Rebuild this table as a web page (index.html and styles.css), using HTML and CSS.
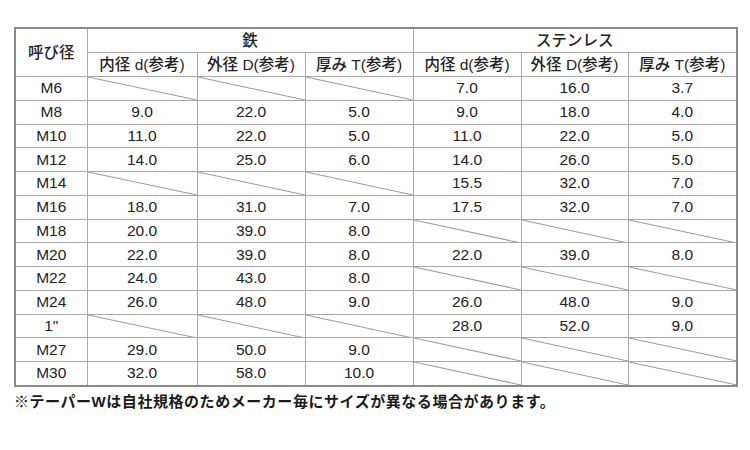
FILE: index.html
```html
<!DOCTYPE html>
<html lang="ja">
<head>
<meta charset="utf-8">
<link rel="stylesheet" href="styles.css">
</head>
<body>
<div class="page">
<table class="spec">
  <colgroup>
    <col class="c-size"><col class="c-a"><col class="c-b"><col class="c-c"><col class="c-d"><col class="c-e"><col class="c-f">
  </colgroup>
  <thead>
    <tr><th rowspan="2" class="h">呼び径</th><th colspan="3" class="h">鉄</th><th colspan="3" class="h">ステンレス</th></tr>
    <tr><th class="h">内径 d(参考)</th><th class="h">外径 D(参考)</th><th class="h">厚み T(参考)</th><th class="h">内径 d(参考)</th><th class="h">外径 D(参考)</th><th class="h">厚み T(参考)</th></tr>
  </thead>
  <tbody>
    <tr><td>M6</td><td class="x"></td><td class="x"></td><td class="x"></td><td>7.0</td><td>16.0</td><td>3.7</td></tr>
    <tr><td>M8</td><td>9.0</td><td>22.0</td><td>5.0</td><td>9.0</td><td>18.0</td><td>4.0</td></tr>
    <tr><td>M10</td><td>11.0</td><td>22.0</td><td>5.0</td><td>11.0</td><td>22.0</td><td>5.0</td></tr>
    <tr><td>M12</td><td>14.0</td><td>25.0</td><td>6.0</td><td>14.0</td><td>26.0</td><td>5.0</td></tr>
    <tr><td>M14</td><td class="x"></td><td class="x"></td><td class="x"></td><td>15.5</td><td>32.0</td><td>7.0</td></tr>
    <tr><td>M16</td><td>18.0</td><td>31.0</td><td>7.0</td><td>17.5</td><td>32.0</td><td>7.0</td></tr>
    <tr><td>M18</td><td>20.0</td><td>39.0</td><td>8.0</td><td class="x"></td><td class="x"></td><td class="x"></td></tr>
    <tr><td>M20</td><td>22.0</td><td>39.0</td><td>8.0</td><td>22.0</td><td>39.0</td><td>8.0</td></tr>
    <tr><td>M22</td><td>24.0</td><td>43.0</td><td>8.0</td><td class="x"></td><td class="x"></td><td class="x"></td></tr>
    <tr><td>M24</td><td>26.0</td><td>48.0</td><td>9.0</td><td>26.0</td><td>48.0</td><td>9.0</td></tr>
    <tr><td>1"</td><td class="x"></td><td class="x"></td><td class="x"></td><td>28.0</td><td>52.0</td><td>9.0</td></tr>
    <tr><td>M27</td><td>29.0</td><td>50.0</td><td>9.0</td><td class="x"></td><td class="x"></td><td class="x"></td></tr>
    <tr><td>M30</td><td>32.0</td><td>58.0</td><td>10.0</td><td class="x"></td><td class="x"></td><td class="x"></td></tr>
  </tbody>
</table>
<p class="note">※テーパーWは自社規格のためメーカー毎にサイズが異なる場合があります。</p>
</div>
</body>
</html>
```

FILE: styles.css
```css
html, body {
  margin: 0;
  padding: 0;
  background: #ffffff;
}
.page {
  padding: 27px 0 0 14px;
  font-family: "Liberation Sans", "Noto Sans CJK JP", sans-serif;
  color: #222222;
}
.spec {
  border-collapse: collapse;
  table-layout: fixed;
  width: 722px;
  border: 2px solid #8a8a8a;
}
.c-size { width: 72px; }
.c-a { width: 110px; }
.c-b { width: 108px; }
.c-c { width: 108px; }
.c-d { width: 108px; }
.c-e { width: 107px; }
.c-f { width: 109px; }
.spec th, .spec td {
  border: 1px solid #a8a8a8;
  padding: 0;
  height: 22.75px;
  text-align: center;
  vertical-align: middle;
  font-size: 15.5px;
  line-height: 18px;
  white-space: nowrap;
}
.spec th.h {
  font-weight: 500;
  font-size: 15.5px;
  height: 23px;
}
.spec td.x {
  background-image: url("data:image/svg+xml,%3Csvg xmlns='http://www.w3.org/2000/svg' width='100' height='100' viewBox='0 0 100 100' preserveAspectRatio='none'%3E%3Cline x1='0' y1='0' x2='100' y2='100' stroke='%239a9a9a' stroke-width='1' vector-effect='non-scaling-stroke'/%3E%3C/svg%3E");
  background-size: 100% 100%;
  background-repeat: no-repeat;
}
.note {
  margin: 5px 0 0 0;
  font-size: 15px;
  font-weight: 700;
  line-height: 20px;
  letter-spacing: 0.55px;
  color: #1a1a1a;
}
```
